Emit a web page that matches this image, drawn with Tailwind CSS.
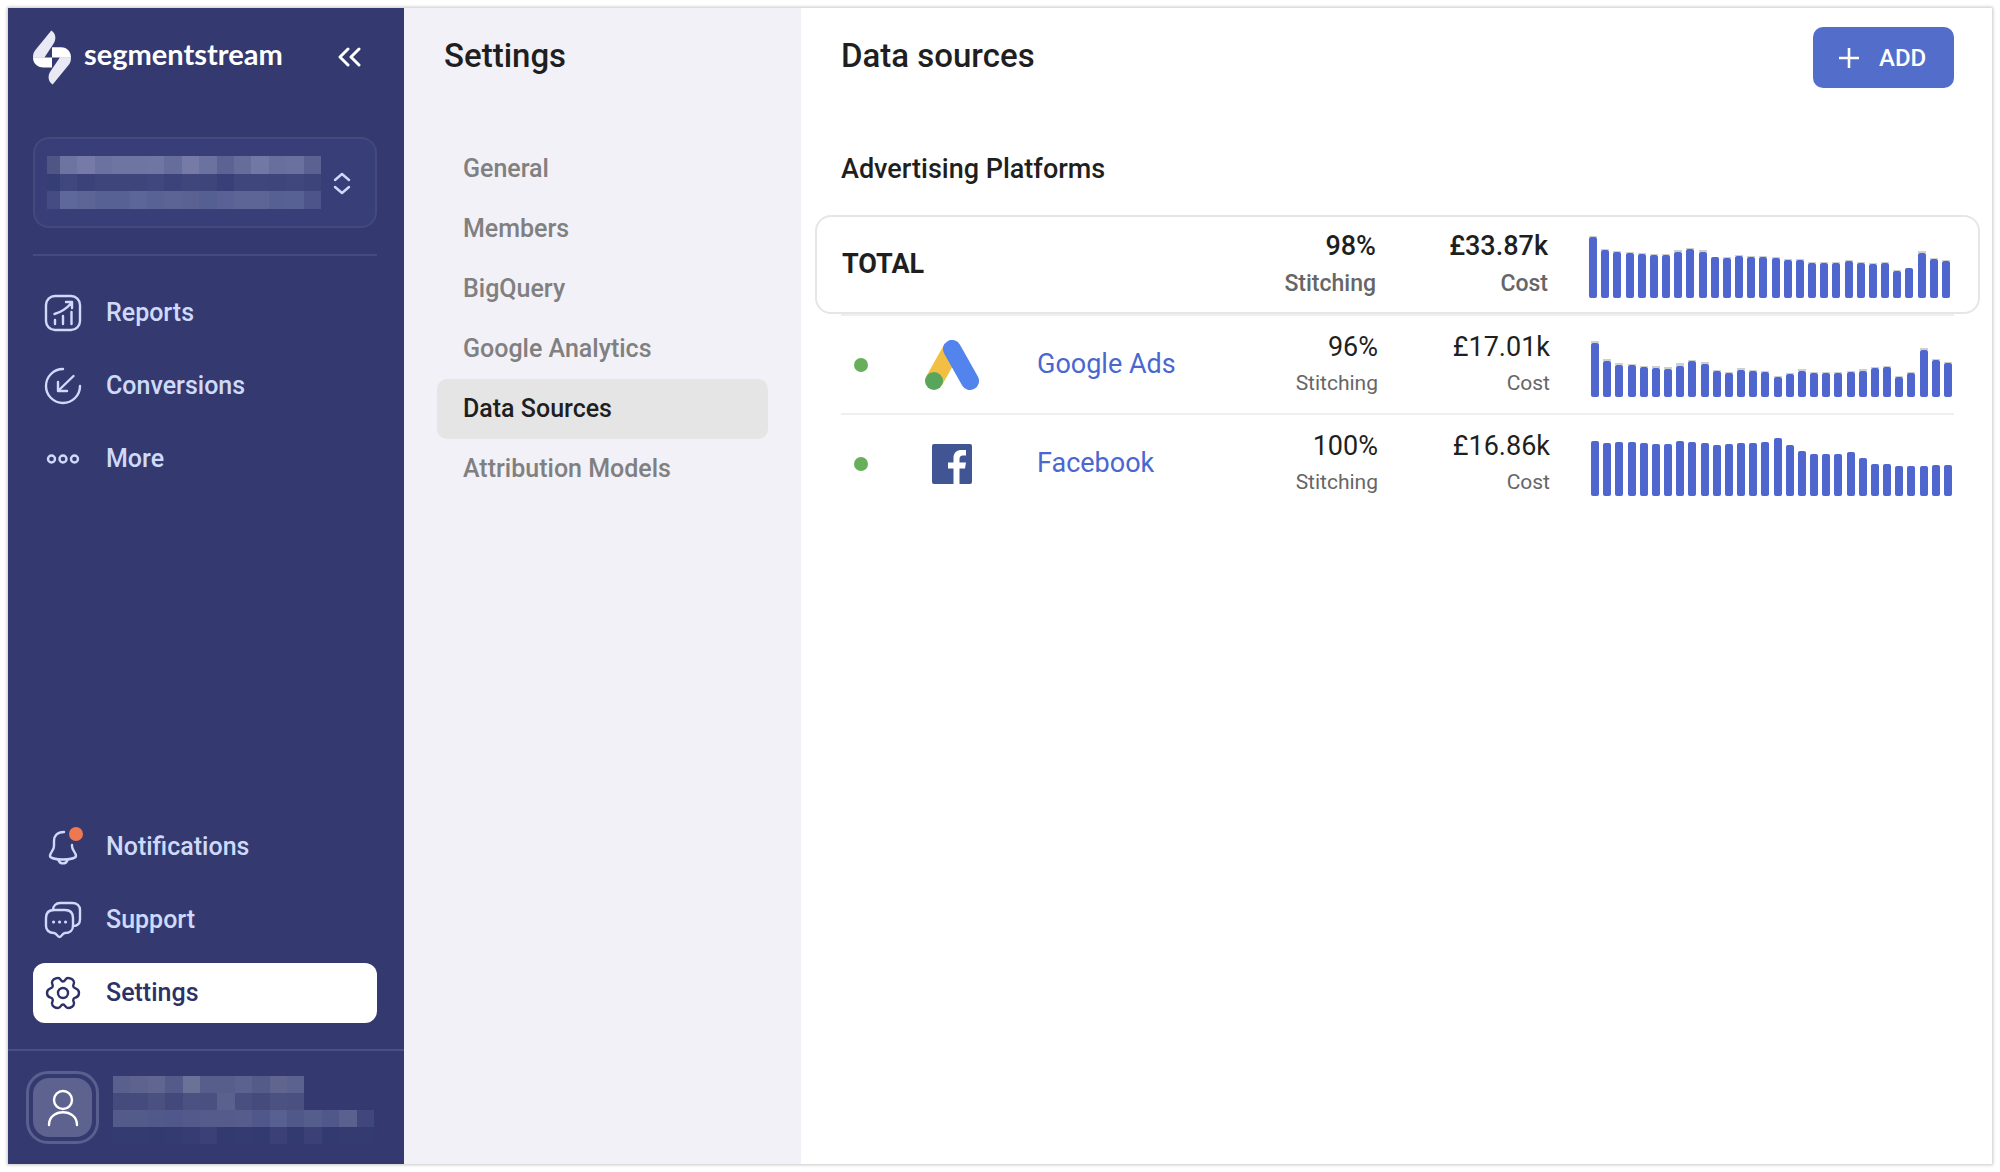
<!DOCTYPE html>
<html lang="en">
<head>
    <meta charset="UTF-8">
    <meta name="viewport" content="width=device-width, initial-scale=1.0">
    <title>Data sources - segmentstream</title>
    <script src="https://cdn.jsdelivr.net/npm/@tailwindcss/browser@4"></script>
</head>
<body class="bg-white p-2 font-[Roboto,'Liberation_Sans',sans-serif] text-[#1f1f1f]">
    <div class="flex min-h-[calc(100vh-16px)] bg-white shadow-[0_0_3px_1px_rgba(0,0,0,0.22)]">

        <!-- Sidebar -->
        <aside class="flex w-[396px] shrink-0 flex-col bg-[#343a70] text-[#cfdafb]">
            <div class="flex h-[103px] items-start justify-between pt-[22px] pr-[43px] pl-[25px]">
                <a href="#" class="flex items-start gap-[13px] text-white">
                    <svg class="h-[55px] w-[38px]" viewBox="99 91 114 164" aria-hidden="true">
                        <path fill="#e9e9f5" d="M154 92C167 100 170 117 161 131L133 174H99C99 162 101 156 108 148Z"/>
                        <path fill="#e9e9f5" d="M158 254C145 246 142 229 151 215L180 172H213C213 184 211 190 204 198Z"/>
                        <path fill="#fff" d="M99 173H156V203H130C111 203 99 190 99 173Z"/>
                        <path fill="#fff" d="M213 173H156V142H184C201 142 213 156 213 173Z"/>
                    </svg>
                    <span class="font-[Lato,sans-serif] text-[29px] leading-[48px] font-bold">segmentstream</span>
                </a>
                <button type="button" aria-label="Collapse menu" class="mt-[15px] text-white">
                    <svg class="h-6 w-6" viewBox="0 0 24 24" fill="none" stroke="currentColor" stroke-width="3" stroke-linecap="round" stroke-linejoin="round">
                        <path d="M11 4L3 12L11 20M22 4L14 12L22 20"/>
                    </svg>
                </button>
            </div>

            <!-- Project switcher -->
            <div class="mr-[27px] ml-[25px] mt-[26px] border-b-2 border-[#454b7e] pb-[26px]">
                <button type="button" aria-label="Switch project" class="flex h-[91px] w-full items-center justify-between rounded-[16px] border-2 border-[#444a7b] bg-[#383f78] pr-[23px] pl-3">
                    <span id="project-name" class="grid h-[53px] w-[274px] grid-cols-[3fr_repeat(15,4fr)] grid-rows-3"></span>
                    <svg class="h-6 w-[20px]" viewBox="0 0 20 24" fill="none" stroke="#cfdafb" stroke-width="2.400" stroke-linecap="round" stroke-linejoin="round">
                        <path d="M3 9L10 3L17 9M3 16L10 22L17 16"/>
                    </svg>
                </button>
            </div>

            <nav class="mr-[27px] ml-[25px] mt-[27px] flex flex-col gap-[13px] text-[25px] font-medium">
                <a href="#" class="flex h-[60px] items-center gap-6 rounded-xl pl-[11px]">
                    <svg class="h-[38px] w-[38px]" viewBox="0 0 38 38" fill="none" stroke="currentColor" stroke-width="2.400" stroke-linecap="round" stroke-linejoin="round">
                        <rect x="2" y="2" width="34" height="34" rx="9"/>
                        <path d="M11 30V26M19 30V22M27.500 30V18M10.500 20C18 18 23 14 27.500 9M22 8H28V14"/>
                    </svg>
                    Reports
                </a>
                <a href="#" class="flex h-[60px] items-center gap-6 rounded-xl pl-[11px]">
                    <svg class="h-[38px] w-[38px]" viewBox="0 0 38 38" fill="none" stroke="currentColor" stroke-width="2.400" stroke-linecap="round" stroke-linejoin="round">
                        <path d="M19 2A17 17 0 1 0 36 19M29.500 9L14 24M14 15V24H23"/>
                    </svg>
                    Conversions
                </a>
                <a href="#" class="flex h-[60px] items-center gap-6 rounded-xl pl-[11px]">
                    <svg class="h-[38px] w-[38px]" viewBox="0 0 38 38" fill="none" stroke="currentColor" stroke-width="2.400">
                        <circle cx="7.500" cy="19" r="3.500"/><circle cx="19" cy="19" r="3.500"/><circle cx="30.500" cy="19" r="3.500"/>
                    </svg>
                    More
                </a>
            </nav>

            <nav class="mr-[27px] ml-[25px] mt-auto mb-[26px] flex flex-col gap-[13px] text-[25px] font-medium">
                <a href="#" class="flex h-[60px] items-center gap-6 rounded-xl pl-[11px]">
                    <svg class="h-[38px] w-[38px] overflow-visible" viewBox="0 0 38 38" fill="none" stroke="currentColor" stroke-width="2.400" stroke-linecap="round" stroke-linejoin="round">
                        <path d="M20 4C13 4 10 8 10 13V18C10 23 6 24 6 28C6 30 12 31.500 19 31.500S32 30 32 28C32 24 28 23 28 18V17"/>
                        <path d="M14.500 32C16 36.500 22 36.500 23.500 32"/>
                        <circle cx="32" cy="6" r="7" fill="#ee7850" stroke="none"/>
                    </svg>
                    Notifications
                </a>
                <a href="#" class="flex h-[60px] items-center gap-6 rounded-xl pl-[11px]">
                    <svg class="h-[38px] w-[38px]" viewBox="0 0 38 38" fill="none" stroke="currentColor" stroke-width="2.400" stroke-linecap="round" stroke-linejoin="round">
                        <path d="M10 9H21C26 9 29 12 29 17V25C29 29 26 32 21 32C18 32 18 36 15.500 36C13 36 13 32 10 32C5 32 2 29 2 25V17C2 12 5 9 10 9Z"/>
                        <path d="M9 9C9 5 12 2 16 2H28C33 2 36 5 36 9V18C36 22 34 25 29 25"/>
                        <path stroke-width="3" d="M9.500 21H9.600M15.500 21H15.600M21.500 21H21.600"/>
                    </svg>
                    Support
                </a>
                <a href="#" aria-current="page" class="flex h-[60px] items-center gap-6 rounded-xl bg-white pl-[11px] text-[#2c3268]">
                    <svg class="h-[38px] w-[38px]" viewBox="0 0 38 38" fill="none" stroke="currentColor" stroke-width="2.400" stroke-linecap="round" stroke-linejoin="round">
                        <path d="M19 7.500C21.500 7.500 21 4 24 4C27 4 30 6 30 8.500C30 10.500 28.500 11 29.500 13C30.500 15 35 13.500 35 19C35 24.500 30.500 23 29.500 25C28.500 27 30 27.500 30 29.500C30 32 27 34 24 34C21 34 21.500 30.500 19 30.500C16.500 30.500 17 34 14 34C11 34 8 32 8 29.500C8 27.500 9.500 27 8.500 25C7.500 23 3 24.500 3 19C3 13.500 7.500 15 8.500 13C9.500 11 8 10.500 8 8.500C8 6 11 4 14 4C17 4 16.500 7.500 19 7.500Z"/>
                        <circle cx="19" cy="19" r="5"/>
                    </svg>
                    Settings
                </a>
            </nav>

            <!-- Account -->
            <div class="flex h-[115px] items-start gap-[14px] border-t-2 border-[#4a5083] pt-5 pl-[18px]">
                <div class="h-[73px] w-[73px] rounded-[22px] border-3 border-[#595f8e] p-1">
                    <div class="flex h-full w-full items-center justify-center rounded-[16px] bg-[#5d628e]">
                        <svg class="h-[38px] w-[32px]" viewBox="0 0 32 38" fill="none" stroke="#fff" stroke-width="2.400" stroke-linecap="round">
                            <circle cx="16" cy="11" r="9"/>
                            <path d="M2 36C2 19 30 19 30 36"/>
                        </svg>
                    </div>
                </div>
                <div id="account-name" class="mt-[5px] grid h-[68px] w-[261px] grid-cols-15 grid-rows-4"></div>
            </div>
        </aside>

        <!-- Settings menu -->
        <section class="w-[397px] shrink-0 bg-[#f2f1f7]">
            <h2 class="pt-[26px] pl-10 text-[33px] leading-[44px] font-medium">Settings</h2>
            <nav class="mt-[61px] mr-[33px] ml-[33px] flex flex-col text-[25px] leading-[60px] font-medium text-[#808080]">
                <a href="#" class="rounded-[10px] pl-[26px]">General</a>
                <a href="#" class="rounded-[10px] pl-[26px]">Members</a>
                <a href="#" class="rounded-[10px] pl-[26px]">BigQuery</a>
                <a href="#" class="rounded-[10px] pl-[26px]">Google Analytics</a>
                <a href="#" aria-current="page" class="rounded-[10px] bg-[#e5e5e5] pl-[26px] text-[#1f1f1f]">Data Sources</a>
                <a href="#" class="rounded-[10px] pl-[26px]">Attribution Models</a>
            </nav>
        </section>

        <!-- Data sources -->
        <main class="min-w-0 flex-1">
            <header class="flex items-start justify-between pt-[19px] pr-[38px] pl-10">
                <h1 class="pt-[7px] text-[33px] leading-[44px] font-medium">Data sources</h1>
                <button type="button" class="flex h-[61px] w-[141px] items-center gap-5 rounded-[10px] bg-[#536dcb] pl-[26px] text-[24px] font-medium text-white">
                    <svg class="h-5 w-5" viewBox="0 0 20 20" stroke="currentColor" stroke-width="2.600"><path d="M0 10H20M10 0V20"/></svg>
                    ADD
                </button>
            </header>
            <h2 class="mt-[53px] pl-10 text-[27px] leading-[56px] font-medium">Advertising Platforms</h2>

            <table class="mt-[18px] block">
                <tbody class="block">
                    <tr class="mr-3 ml-[14px] flex h-[99px] items-center rounded-[16px] border-2 border-[#e6e6e6] pr-[28px] pl-[25px]">
                        <th scope="row" class="flex-1 text-left text-[27px] font-bold">TOTAL</th>
                        <td class="text-right text-[27px] leading-[38px] font-medium">98%<div class="text-[23px] leading-[38px] text-[#666]">Stitching</div></td>
                        <td class="w-[172px] text-right text-[27px] leading-[38px] font-medium">£33.87k<div class="text-[23px] leading-[38px] text-[#666]">Cost</div></td>
                        <td class="ml-[41px] flex h-[95px] w-[361px] items-end justify-between pb-[14px]" data-chart="total"></td>
                    </tr>
                    <tr class="mr-[38px] ml-10 flex h-[99px] items-center border-t-2 border-[#efefef] pr-[2px]">
                        <td class="w-[196px]">
                            <div class="flex items-center pl-[13px]">
                                <span class="h-[14px] w-[14px] rounded-full bg-[#68af5c]"></span>
                                <svg class="ml-[57px] h-[50px] w-[54px]" viewBox="0 0 54 50" fill="none" stroke-width="18" stroke-linecap="round" aria-hidden="true">
                                    <path stroke="#f2bf42" stroke-linecap="butt" d="M27 9L9 41"/>
                                    <path stroke="#5383ec" d="M27 9L45 41"/>
                                    <circle cx="9" cy="41" r="9" fill="#58a55c"/>
                                </svg>
                            </div>
                        </td>
                        <td class="flex-1 text-[27px]"><a href="#" class="text-[#4a67d0]">Google Ads</a></td>
                        <td class="text-right text-[27px] leading-9">96%<div class="text-[21px] leading-9 text-[#666]">Stitching</div></td>
                        <td class="w-[172px] text-right text-[27px] leading-9">£17.01k<div class="text-[21px] leading-9 text-[#666]">Cost</div></td>
                        <td class="ml-[41px] flex h-[97px] w-[361px] items-end justify-between pb-[16px]" data-chart="google"></td>
                    </tr>
                    <tr class="mr-[38px] ml-10 flex h-[99px] items-center border-t-2 border-[#efefef] pr-[2px]">
                        <td class="w-[196px]">
                            <div class="flex items-center pl-[13px]">
                                <span class="h-[14px] w-[14px] rounded-full bg-[#68af5c]"></span>
                                <svg class="ml-16 h-10 w-10" viewBox="0 0 40 40" aria-hidden="true">
                                    <rect width="40" height="40" rx="2" fill="#415595"/>
                                    <path fill="#fff" d="M21.500 40V24.500H16V18.500H21.500V14C21.500 8.500 25 6 29.500 6H34V11.500H31C28.500 11.500 27.500 12.700 27.500 15V18.500H34L33 24.500H27.500V40Z"/>
                                </svg>
                            </div>
                        </td>
                        <td class="flex-1 text-[27px]"><a href="#" class="text-[#4a67d0]">Facebook</a></td>
                        <td class="text-right text-[27px] leading-9">100%<div class="text-[21px] leading-9 text-[#666]">Stitching</div></td>
                        <td class="w-[172px] text-right text-[27px] leading-9">£16.86k<div class="text-[21px] leading-9 text-[#666]">Cost</div></td>
                        <td class="ml-[41px] flex h-[97px] w-[361px] items-end justify-between pb-[16px]" data-chart="facebook"></td>
                    </tr>
                </tbody>
            </table>
        </main>
    </div>

    <script>
        // cost per day, with the unstitched part drawn as a grey cap
        const charts = {
            total: {
                cost: [61,48,46,45,44,43,43,46,49,46,41,40,42,41,41,40,38,38,35,35,35,37,35,34,35,27,30,45,39,37],
                rest: [1,1,1,1,1,1,1,2,1,2,0,1,1,1,1,1,1,1,1,1,1,1,1,1,1,1,0,2,1,1]
            },
            google: {
                cost: [54,36,32,32,30,29,28,31,36,33,26,24,27,26,25,20,23,26,24,24,24,25,26,29,30,20,24,47,37,34],
                rest: [2,2,2,1,1,2,2,3,1,2,1,1,2,1,1,1,1,2,1,1,1,1,2,1,1,1,1,2,1,1]
            },
            facebook: {
                cost: [55,53,54,54,53,52,52,55,54,53,51,52,53,53,54,58,51,45,42,42,42,44,38,32,32,30,30,30,31,31],
                rest: []
            }
        };

        document.querySelectorAll('[data-chart]').forEach(cell => {
            const { cost, rest } = charts[cell.dataset.chart];
            cell.innerHTML = cost.map((h, i) =>
                `<div class="w-2"><div class="bg-[#cfcfcf]" style="height:${rest[i] || 0}px"></div><div class="rounded-[2px] bg-[#4f66cf]" style="height:${h}px"></div></div>`
            ).join('');
        });

        // masked names
        const masks = {
            'project-name': '4f5585 6e74a0 757aa6 6b729f 6d75a0 6d75a0 6f76a2 656d9b 757aa6 6b729f 5c6292 666d9a 7178a3 686f9c 6a719e 5b6291 ' +
                '363e76 3f477c 3b4279 3d457b 3d457b 3d457b 3f477e 3c437a 3e467c 3d457b 393f78 3e467c 3e467c 3d457b 3f477d 3d447a ' +
                '444c83 5f689a 5d6597 586193 586193 5d6698 596294 5c6496 5a6294 565f92 5a6195 5d6597 5d6496 576093 586193 4c5489',
            'account-name': '5a608e 5d628f 60668f 545b8a 6c7198 575e8c 575e8c 5c628f 555b89 60658f 5c628f 343a70 343a70 343a70 343a70 ' +
                '454c7d 454c7d 4a5080 434a7b 4b5180 4a507f 5b618d 494f7f 454c7d 4b5180 4a507f 343a70 343a70 343a70 343a70 ' +
                '535b8b 535b8b 51588a 50578a 535a8b 555c8c 555c8c 565d8d 50578a 586091 50588a 555d8c 50578a 5a618f 40477c ' +
                '343b71 343b71 333a70 343b71 363d73 3b4177 333a70 343b71 333a70 3b4177 333a70 3b4177 333a70 343b71 343b71'
        };

        for (const id in masks) {
            document.getElementById(id).innerHTML = masks[id].split(' ')
                .map(c => `<span style="background:#${c}"></span>`).join('');
        }
    </script>
</body>
</html>
